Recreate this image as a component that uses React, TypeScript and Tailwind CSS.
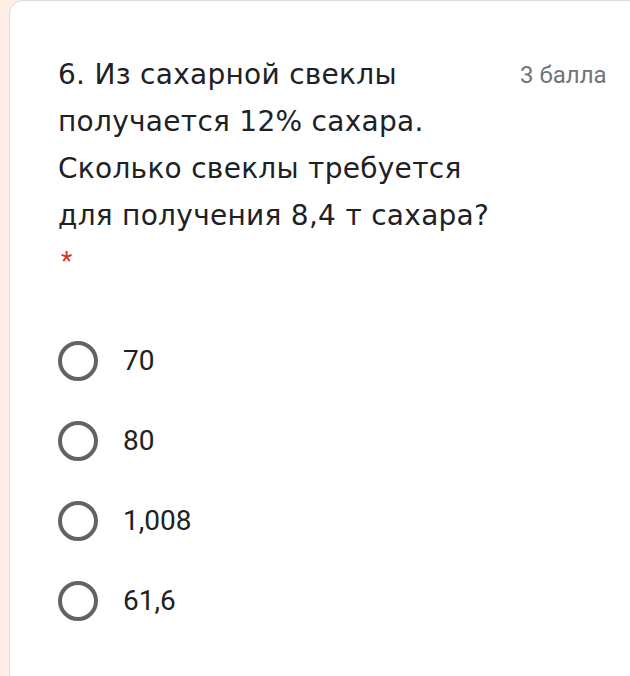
import { ReactNode } from "react";

const options = ["70", "80", "1,008", "61,6"];

function Radio({ children }: { children: ReactNode }) {
  return (
    <label className="flex h-[80px] items-center gap-[25px]">
      <span className="block h-[40px] w-[40px] shrink-0 rounded-full border-[4px] border-[#5f6368]" />
      <span className="text-[28px] leading-none text-[#202124]" style={{ fontFamily: "Roboto, 'Liberation Sans', sans-serif" }}>
        {children}
      </span>
    </label>
  );
}

export default function App() {
  return (
    <div className="h-[676px] w-[630px] overflow-hidden bg-[#fdefe5] pl-[9px]">
      <div className="h-[700px] w-[660px] rounded-tl-[14px] border border-[#dadce0] bg-white pl-[48px] pt-[50px]">
        {/* Question header */}
        <div className="flex items-start">
          <h2
            className="w-[452px] text-[28px] leading-[47px] tracking-[0.01em] text-[#202124]"
            style={{ fontFamily: "'DejaVu Sans', 'Noto Sans', sans-serif" }}
          >
            6. Из сахарной свеклы
            <br />
            получается 12% сахара.
            <br />
            Сколько свеклы требуется
            <br />
            для получения 8,4 т сахара?
          </h2>
          <span
            className="ml-[10px] mt-[10px] text-[24px] leading-[28px] text-[#70757a]"
            style={{ fontFamily: "Roboto, 'Liberation Sans', sans-serif" }}
          >
            3 балла
          </span>
        </div>
        <div className="pl-[3px] pt-[2px] text-[26px] leading-[40px] text-[#d93025]" style={{ fontFamily: "Roboto, sans-serif" }}>
          *
        </div>

        {/* Options */}
        <div className="mt-[40px] flex flex-col">
          {options.map((o) => (
            <Radio key={o}>{o}</Radio>
          ))}
        </div>
      </div>
    </div>
  );
}
